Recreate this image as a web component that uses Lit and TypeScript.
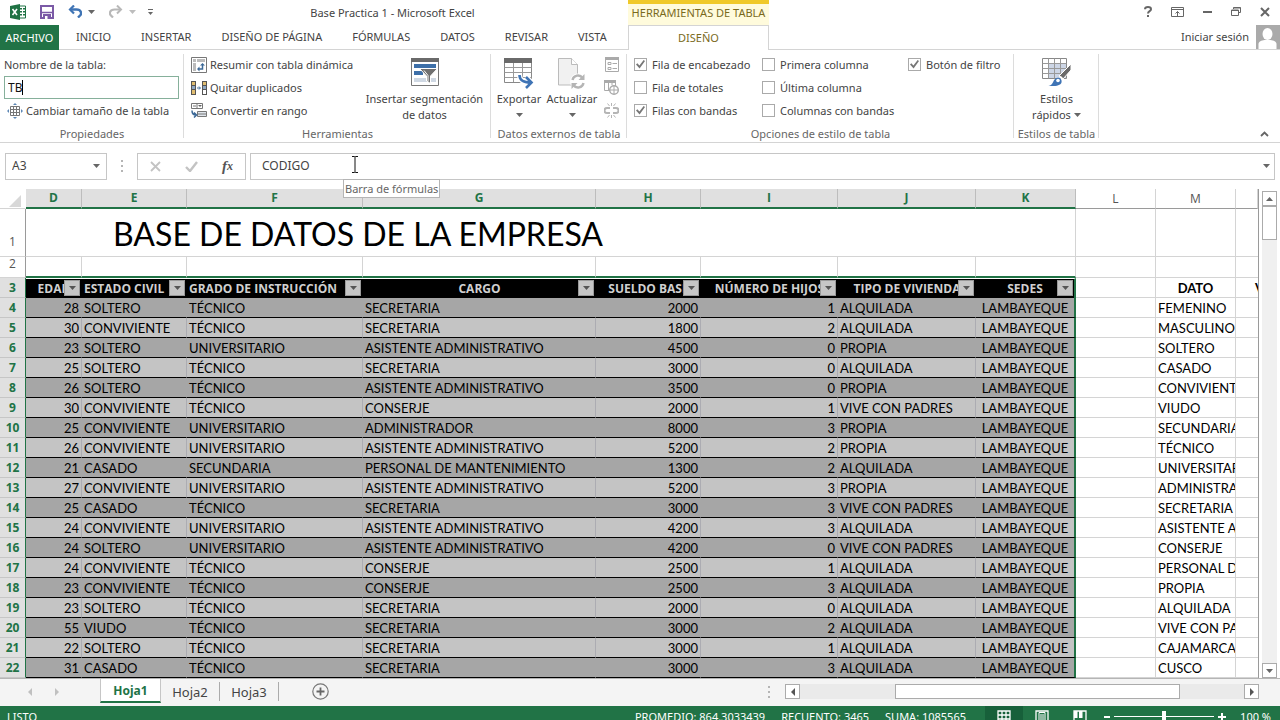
import { LitElement, html, css, svg } from "lit";
import { customElement } from "lit/decorators.js";
import { classMap } from "lit/directives/class-map.js";

type Row = [number, string, string, string, number, number, string];

const S = "SOLTERO", C = "CASADO", V = "CONVIVIENTE";
const T = "TÉCNICO", U = "UNIVERSITARIO";
const SEC = "SECRETARIA", ASI = "ASISTENTE ADMINISTRATIVO", CON = "CONSERJE";
const ALQ = "ALQUILADA", PRO = "PROPIA", PAD = "VIVE CON PADRES";

const ROWS: Row[] = [
  [28, S, T, SEC, 2000, 1, ALQ],
  [30, V, T, SEC, 1800, 2, ALQ],
  [23, S, U, ASI, 4500, 0, PRO],
  [25, S, T, SEC, 3000, 0, ALQ],
  [26, S, T, ASI, 3500, 0, PRO],
  [30, V, T, CON, 2000, 1, PAD],
  [25, V, U, "ADMINISTRADOR", 8000, 3, PRO],
  [26, V, U, ASI, 5200, 2, PRO],
  [21, C, "SECUNDARIA", "PERSONAL DE MANTENIMIENTO", 1300, 2, ALQ],
  [27, V, U, ASI, 5200, 3, PRO],
  [25, C, T, SEC, 3000, 3, PAD],
  [24, V, U, ASI, 4200, 3, ALQ],
  [24, S, U, ASI, 4200, 0, PAD],
  [24, V, T, CON, 2500, 1, ALQ],
  [23, V, T, CON, 2500, 3, ALQ],
  [23, S, T, SEC, 2000, 0, ALQ],
  [55, "VIUDO", T, SEC, 3000, 2, ALQ],
  [22, S, T, SEC, 3000, 1, ALQ],
  [31, C, T, SEC, 3000, 3, ALQ],
];

const DATO = [
  "FEMENINO", "MASCULINO", S, C, V, "VIUDO", "SECUNDARIA", T, U, "ADMINISTRADOR",
  SEC, ASI, CON, "PERSONAL DE MANTENIMIENTO", PRO, ALQ, PAD, "CAJAMARCA", "CUSCO",
];

const FIELDS = [
  "EDAD", "ESTADO CIVIL", "GRADO DE INSTRUCCIÓN", "CARGO",
  "SUELDO BASE", "NÚMERO DE HIJOS", "TIPO DE VIVIENDA", "SEDES",
];
const LETTERS = ["D", "E", "F", "G", "H", "I", "J", "K", "L", "M"];
const TABS = ["INICIO", "INSERTAR", "DISEÑO DE PÁGINA", "FÓRMULAS", "DATOS", "REVISAR", "VISTA"];

const icon = (w: number, h: number, body: unknown) =>
  html`<svg width=${w} height=${h} viewBox="0 0 ${w} ${h}" fill="none" aria-hidden="true">${body}</svg>`;

const down = (fill = "#666") => icon(7, 4, svg`<path d="M0 0h7L3.500 4z" fill=${fill}/>`);

const I = {
  excel: icon(16, 16, svg`
    <path d="M9 2h6.500v12H9z" fill="#fff" stroke="#1f7244"/>
    <path d="M10 4h2v1.500h-2zM13 4h2v1.500h-2zM10 7h2v1.500h-2zM13 7h2v1.500h-2zM10 10h2v1.500h-2zM13 10h2v1.500h-2z" fill="#1f7244"/>
    <path d="M0 2l10-2v16L0 14z" fill="#1f7244"/>
    <path d="M2.500 5l4.500 6M7 5l-4.500 6" stroke="#fff" stroke-width="1.600"/>`),
  save: icon(14, 14, svg`
    <path d="M1 1h12v12H1z" fill="#fff" stroke="#7b5aa6" stroke-width="2"/>
    <path d="M2 7.500h10" stroke="#7b5aa6" stroke-width="1.500"/>
    <path d="M3 9h8v5H3z" fill="#7b5aa6"/><path d="M5 11h2.500v3H5z" fill="#fff"/>`),
  undo: icon(14, 13, svg`
    <path d="M2 4.500h6.500c5 0 5 4 4 5.500l-2.500 2.500" stroke="#3f74b5" stroke-width="2.400"/>
    <path d="M6 .5L2 4.500l4 4" stroke="#3f74b5" stroke-width="2.200"/>`),
  redo: icon(14, 13, svg`
    <path d="M12 4.500H5.500c-5 0-5 4-4 5.500L4 12.500" stroke="#b8b8b8" stroke-width="2.200"/>
    <path d="M8 .5l4 4-4 4" stroke="#b8b8b8" stroke-width="2"/>`),
  more: icon(5, 6, svg`<path d="M0 .5h5" stroke="#666"/><path d="M0 3h5L2.500 6z" fill="#666"/>`),
  help: icon(8, 11, svg`<path d="M1 3.200C1 .3 7 .3 7 3.200 7 5.200 4 5 4 7.500" stroke="#666" stroke-width="2"/><path d="M3 9h2v2H3z" fill="#666"/>`),
  display: icon(13, 10, svg`<path d="M.5 .5h12v9H.5zM.5 2.500h12" stroke="#666"/><path d="M6.500 9V4.500M4.500 6.500l2-2 2 2" stroke="#666"/>`),
  min: icon(9, 2, svg`<path d="M0 0h9v2H0z" fill="#666"/>`),
  restore: icon(10, 9, svg`<path d="M2.500 2V.5h7v5H8M.5 3h7v5.500h-7zM.5 3.500h7M2.500 1h7" stroke="#666"/>`),
  close: icon(10, 10, svg`<path d="M1 1l8 8M9 1L1 9" stroke="#666" stroke-width="2"/>`),
  user: icon(24, 24, svg`
    <path d="M0 0h24v24H0z" fill="#aaa"/><ellipse cx="11.500" cy="9" rx="5" ry="6" fill="#fff"/>
    <path d="M2.500 24v-5c0-2.500 3-3.500 6-4h6c3 .5 6 1.500 6 4v5z" fill="#fff"/>`),
  resize: icon(16, 16, svg`
    <path d="M3.500 3.500h9v9h-9zM3.500 6.500h9M3.500 9.500h9M6.500 3.500v9M9.500 3.500v9" stroke="#777" fill="#fff"/>
    <path d="M8 0l2 2H6zM8 16l2-2H6zM0 8l2-2v4zM16 8l-2-2v4z" fill="#5d87b5"/>`),
  pivot: icon(16, 16, svg`
    <path d="M.5 .5h15v15H.5z" fill="#fff" stroke="#777"/>
    <path d="M2 2h3v3H2zM6 2h8v3H6zM2 6h3v8H2z" fill="#bbb"/>
    <path d="M7 12h4.500V7.500" stroke="#3c6997" stroke-width="1.500"/>
    <path d="M8.500 9.500v5L6 12zM9 8.500h5L11.500 6z" fill="#3c6997"/>`),
  dupes: icon(16, 14, svg`
    <path d="M0 0h5v14H0z" fill="#555"/><path d="M1 1h3v3H1zM1 9h3v4H1z" fill="#e0bd70"/><path d="M1 5h3v3H1z" fill="#8fa8c4"/>
    <path d="M6 7h3M8 5.500L9.500 7 8 8.500" stroke="#3c6997"/>
    <path d="M11 0h5v14h-5z" fill="#555"/><path d="M12 1h3v3h-3z" fill="#e0bd70"/><path d="M12 5h3v3h-3z" fill="#8fa8c4"/><path d="M12 9h3v4h-3z" fill="#fff"/>`),
  range: icon(16, 15, svg`
    <path d="M.5 .5h11v5H.5z" fill="#fff" stroke="#777"/><path d="M2 2h3v2H2z" fill="#bbb"/><path d="M6 .5v5" stroke="#777"/><path d="M7 2h4L9 4z" fill="#666"/>
    <path d="M6.500 8.500h9v5h-9zM6.500 11h9" fill="#dfe5ec" stroke="#777"/>
    <path d="M1 7.500c0 3 1 4.500 4 4.500M3 9.500L5.500 12 3 14.500" stroke="#3c6997" stroke-width="1.500"/>`),
  slicer: icon(28, 28, svg`
    <path d="M.5 .5h27v27H.5z" fill="#fff" stroke="#777"/><path d="M0 0h28v4H0z" fill="#6a6a6a"/>
    <path d="M3 6h22v4H3zM3 13h9v4H3z" fill="#3d6fa8"/><path d="M3 20h22v4H3z" fill="#cfd8e3"/>
    <path d="M8.500 10.500h18L19.500 18v7.500l-4-2.500v-5z" fill="#707070" stroke="#fff"/><path d="M13 12.500l4 5v6" stroke="#fff"/>`),
  export: icon(30, 31, svg`
    <path d="M.5 .5h27v24H.5z" fill="#fff" stroke="#888"/><path d="M.5 9.500h27M.5 14.500h27M.5 19.500h27M9.500 4v20M18.500 4v20" stroke="#999"/>
    <path d="M0 0h28v5H0z" fill="#6a6a6a"/>
    <path d="M15.500 17c0 5 3 7.500 10 7.500M22 19l6 5.500-6 5.500" stroke="#fff" stroke-width="5"/>
    <path d="M15.500 17c0 5 3 7.500 11 7.500M22 19l5.500 5.500L22 30" stroke="#3f74b5" stroke-width="2.600"/>`),
  refresh: icon(28, 31, svg`
    <path d="M.5 .5h13l6 6V27H.5z" fill="#f1f1f1" stroke="#bbb"/><path d="M13.500 .5v6h6" stroke="#bbb" fill="#fff"/>
    <circle cx="20" cy="23.500" r="8" fill="#fff"/>
    <path d="M14.500 22a5.500 5.500 0 0 1 10-2M25.500 25a5.500 5.500 0 0 1-10 2" stroke="#b5b5b5" stroke-width="2.400"/>
    <path d="M26.500 16v6h-6zM13.500 31v-6h6z" fill="#b5b5b5"/>`),
  props: icon(14, 15, svg`
    <path d="M.5 .5h13v14H.5z" stroke="#aaa" fill="#fff"/><path d="M0 0h14v3H0z" fill="#aaa"/>
    <path d="M3 5.500h3v2H3zM3 10.500h3v2H3z" stroke="#aaa"/><path d="M7.500 6.500H12M7.500 11.500H12" stroke="#aaa"/>`),
  browser: icon(15, 15, svg`
    <path d="M.5 .5h11v10H.5zM4.500 2v8M8 2v3" stroke="#aaa"/><path d="M0 0h12v3H0z" fill="#aaa"/>
    <circle cx="10" cy="10" r="4.300" fill="#fff" stroke="#aaa" stroke-width="1.400"/><path d="M6 10h8M10 6v8" stroke="#aaa"/>`),
  unlink: icon(15, 15, svg`
    <path d="M6 5H3a2.500 2.500 0 0 0 0 5h3M9 5h3a2.500 2.500 0 0 1 0 5H9" stroke="#b5b5b5" stroke-width="2"/>
    <path d="M7.500 0v3M7.500 12v3M3.500 .5l2 2.500M11.500 .5l-2 2.500M3.500 14.500l2-2.500M11.500 14.500l-2-2.500" stroke="#b5b5b5"/>`),
  styles: icon(29, 29, svg`
    <path d="M.5 .5h24v20H.5z" fill="#fff" stroke="#888"/><path d="M6 5h18v15H6z" fill="#cdd6e6"/>
    <path d="M.5 5.500h24M.5 10.500h24M.5 15.500h24M6.500 .5v20M12.500 .5v20M18.500 .5v20" stroke="#999"/>
    <path d="M29 6v6l-8 9-4-3z" fill="#6a6a6a" stroke="#fff"/>
    <path d="M18 18.500l3 3" stroke="#fff" stroke-width="2"/>
    <path d="M6.500 28c5-1 4-5 7-7.500 3-2 7 .5 6 4-1 3-6 4-13 3.500z" fill="#3f74b5"/><circle cx="16" cy="22.500" r="1.800" fill="#fff"/>`),
  collapse: icon(9, 6, svg`<path d="M1 5l3.500-3.500L8 5" stroke="#666" stroke-width="1.800"/>`),
  cancel: icon(11, 11, svg`<path d="M1 1l9 9M10 1l-9 9" stroke="#c3c3c3" stroke-width="1.800"/>`),
  ok: icon(13, 11, svg`<path d="M1 6l4 4 7-9" stroke="#c3c3c3" stroke-width="2.400"/>`),
  prev: icon(4, 8, svg`<path d="M4 0v8L0 4z" fill="#c0c0c0"/>`),
  next: icon(4, 8, svg`<path d="M0 0v8l4-4z" fill="#c0c0c0"/>`),
  add: icon(17, 17, svg`<circle cx="8.500" cy="8.500" r="7.700" stroke="#777" stroke-width="1.200"/><path d="M8.500 4.500v8M4.500 8.500h8" stroke="#666" stroke-width="1.800"/>`),
  dots: icon(2, 12, svg`<path d="M0 0h2v2H0zM0 5h2v2H0zM0 10h2v2H0z" fill="#b5b5b5"/>`),
  left: icon(4, 8, svg`<path d="M4 0v8L0 4z" fill="#555"/>`),
  right: icon(4, 8, svg`<path d="M0 0v8l4-4z" fill="#555"/>`),
  up: icon(7, 4, svg`<path d="M0 4h7L3.500 0z" fill="#666"/>`),
  corner: icon(12, 12, svg`<path d="M12 0v12H0z" fill="#d8d8d8"/>`),
  normal: icon(14, 14, svg`<path d="M1 1h12v12H1zM1 5h12M1 9h12M5 1v12M9 1v12" stroke="#fff" stroke-width="1.300"/>`),
  page: icon(14, 14, svg`<path d="M1 1h12v12H1z" stroke="#fff" stroke-width="1.300"/><path d="M4 2.500v9h6v-9zM5 5h4M5 7h4M5 9h4" stroke="#fff"/>`),
  breaks: icon(14, 14, svg`<path d="M1 1h12v12H1z" stroke="#fff" stroke-width="1.300"/><path d="M1 1h3.500v7H1zM6 1h3.500v7H6z" fill="#fff"/>`),
  ibeam: icon(8, 17, svg`<path d="M1 .5h2.500L4 1l.5-.5H7M1 16.500h2.500L4 16l.5.500H7M4 1v15" stroke="#111"/>`),
};

@customElement("app-root")
export class AppRoot extends LitElement {
  static styles = css`
    :host {
      display: flex;
      flex-direction: column;
      height: 100vh;
      overflow: hidden;
      background: #fff;
      color: #444;
      font: 11px/16px "Noto Sans", "Open Sans", sans-serif;
    }
    * { box-sizing: border-box; }
    svg { display: block; flex: none; }
    button, input {
      font: inherit;
      color: inherit;
      background: none;
      border: 0;
      padding: 0;
      margin: 0;
      border-radius: 0;
      min-width: 0;
    }
    input { font-size: 12px; }
    button { display: flex; align-items: center; justify-content: center; white-space: nowrap; flex: none; }
    a { color: inherit; text-decoration: none; }

    .title { display: flex; height: 25px; flex: none; }
    .quick { display: flex; align-items: center; width: 157px; padding: 0 4px 2px 10px; }
    .quick .save { margin: 0 14px; }
    .quick .drop { margin: 0 14px 0 6px; }
    .quick .drop.faded { margin-right: 12px; }
    .name { width: 471px; text-align: center; line-height: 26px; }
    .context {
      width: 141px;
      border-top: 4px solid #f0c929;
      background: #fffbdc;
      color: #7a6a1c;
      line-height: 18px;
      text-align: center;
      white-space: nowrap;
    }
    .window { display: flex; align-items: center; gap: 19px; margin-left: auto; padding: 0 10px 2px 0; }

    .tabs { display: flex; height: 25px; flex: none; border-bottom: 1px solid #d4d4d4; }
    .tabs .file { width: 59px; background: #217346; color: #fff; height: 25px; }
    .tabs .menu { display: flex; width: 569px; padding-left: 2px; }
    .tabs .tab { padding: 0 15px; }
    .tabs .active {
      width: 141px;
      height: 25px;
      background: #fff;
      color: #7a6a1c;
      border: 1px solid #d4d4d4;
      border-bottom: 0;
    }
    .account { display: flex; align-items: center; gap: 7px; margin-left: auto; }

    .ribbon { display: flex; height: 93px; flex: none; border-bottom: 1px solid #d4d4d4; }
    .group { position: relative; display: flex; flex-direction: column; padding-top: 3px; flex: none; }
    .group::after {
      content: "";
      position: absolute;
      right: 0; top: 4px; bottom: 4px;
      border-right: 1px solid #dcdcdc;
    }
    .group .body { display: flex; height: 73px; }
    .group .caption { color: #666; text-align: center; white-space: nowrap; }
    .stack { display: grid; grid-template-rows: repeat(3, 23px); align-items: center; justify-items: start; }
    .stack button { gap: 3px; }
    .g-props { width: 184px; }
    .g-props .body { padding-left: 4px; }
    .g-tools { width: 307px; }
    .g-tools .body { padding-left: 7px; }
    .g-data { width: 136px; }
    .g-data .body { gap: 4px; padding-left: 6px; }
    .g-options { width: 387px; }
    .g-options .body { padding-left: 7px; }
    .g-styles { width: 85px; }
    .field { position: relative; width: 175px; }
    .field input { display: block; width: 100%; height: 23px; border: 1px solid #86b09b; padding-left: 3px; color: #111; }
    .caret { position: absolute; left: 18px; top: 4px; width: 1px; height: 15px; background: #000; }
    .props-stack button { padding-left: 3px; }
    .big { flex-direction: column; justify-content: flex-start; align-self: flex-start; padding-top: 5px; }
    .big .pic { height: 33px; }
    .big .drop { height: 16px; display: flex; align-items: center; }
    .big .inline { display: flex; align-items: center; gap: 3px; }
    .export { width: 44px; }
    .refresh { width: 54px; }
    .slicer { width: 133px; margin-left: auto; }
    .quick-styles { width: 100%; }
    .small-icons { display: grid; grid-template-rows: repeat(3, 23px); align-items: center; margin-left: auto; padding-right: 8px; }
    .options { gap: 10px; }
    .options .first { width: 118px; }
    .options .second { width: 136px; }
    .check { display: flex; align-items: center; gap: 5px; white-space: nowrap; }
    .check input { appearance: none; width: 13px; height: 13px; border: 1px solid #aaa; background: #fff; }
    .check input:checked::before {
      content: "";
      display: block;
      width: 9px; height: 9px;
      margin: 1px;
      background: #777;
      clip-path: polygon(0 50%, 15% 35%, 38% 62%, 85% 0, 100% 12%, 40% 95%);
    }
    .collapse { margin-left: auto; align-self: flex-end; padding: 0 11px 5px 0; }

    .formula { position: relative; display: flex; align-items: center; height: 46px; flex: none; padding: 0 5px; }
    .box { display: flex; align-items: center; height: 27px; border: 1px solid #c6c6c6; background: #fff; }
    .name-box { width: 102px; padding: 0 6px; }
    .name-box input { flex: 1; }
    .formula .dots { margin: 0 14px; }
    .edit-box { width: 109px; justify-content: space-between; padding: 0 12px; }
    .fx { font: italic bold 15px/16px "Liberation Serif", serif; color: #555; }
    .fx small { font-size: 12px; }
    .input-box { flex: 1; margin-left: 4px; padding: 0 4px 0 11px; }
    .input-box input { flex: 1; }
    .tooltip {
      position: absolute;
      left: 343px; top: 36px;
      z-index: 2;
      border: 1px solid #b5b5b5;
      background: #fff;
      padding: 0 1px;
      line-height: 17px;
      color: #666;
    }
    .pointer { position: absolute; left: 351px; top: 13px; }

    .sheet { display: flex; flex: 1; min-height: 0; overflow: hidden; border-bottom: 1px solid #b5b5b5; }
    .cells { flex: 1; min-width: 0; border-right: 1px solid #9a9a9a; overflow: hidden; }
    table {
      width: 100%;
      table-layout: fixed;
      border-collapse: separate;
      border-spacing: 0;
      font: 13px/18px Lato, "Open Sans", sans-serif;
      color: #000;
    }
    .c0 { width: 26px; } .cD { width: 56px; } .cE, .cH { width: 105px; } .cF { width: 176px; }
    .cG { width: 233px; } .cI { width: 137px; } .cJ { width: 138px; } .cK { width: 100px; }
    .cL, .cM { width: 80px; }
    th, td {
      height: 20px;
      padding: 1px 2px 0;
      overflow: hidden;
      white-space: nowrap;
      text-align: left;
      font-weight: 400;
      border-right: 1px solid #d4d4d4;
      border-bottom: 1px solid #d4d4d4;
    }
    .letters th {
      padding: 0;
      text-align: center;
      color: #555;
      border-bottom: 1px solid #9a9a9a;
      font: 12px/18px "Open Sans", sans-serif;
    }
    .letters .sel { background: #e0e0e0; color: #217346; font-weight: 700; border-bottom: 2px solid #217346; border-right-color: #bdbdbd; }
    .letters .corner { border-right-color: #fff; border-bottom-color: #d4d4d4; }
    .corner svg { margin: 4px 4px 0 auto; }
    th.num { padding: 0; text-align: center; color: #555; font: 12px/18px "Open Sans", sans-serif; border-right-color: #9a9a9a; }
    th.num.sel { background: #e0e0e0; color: #217346; font-weight: 700; border-right: 1px solid #217346; border-bottom-color: #c6c6c6; }
    .r1 > * { height: 48px; vertical-align: bottom; }
    .r1 .num { vertical-align: bottom; padding-bottom: 5px; }
    .r1 .heading { padding: 0 0 3px 87px; font-size: 32px; line-height: 38px; vertical-align: bottom; }
    .r2 > * { height: 21px; }
    .r2 .num { vertical-align: top; line-height: 14px; }
    .r2 .over { border-bottom: 2px solid #217346; }
    .r3 .field-name {
      position: relative;
      background: #000;
      color: #d0d0d0;
      font: bold 12px/17px "Open Sans", sans-serif;
      text-align: center;
      padding-top: 0;
      padding-bottom: 1px;
      border-top: 1px solid #fff;
      border-right: 0;
      border-bottom: 0;
    }
    .r3 .field-name.long { text-align: left; }
    .filter {
      position: absolute;
      right: 2px; top: 1px;
      width: 16px; height: 16px;
      background: #c6c6c6;
      border: 1px solid #9a9a9a;
    }
    .edge .filter { right: 1px; }
    .edge { border-right: 2px solid #217346; }
    .r3 .field-name.edge { border-right: 2px solid #217346; }
    .band td.data { background: #a6a6a6; border-bottom-color: #000; border-right-color: #a6a6a6; }
    .plain td.data { background: #c4c4c4; border-bottom-color: #000; border-right-color: #acacb2; }
    .band td.data.edge, .plain td.data.edge { border-right-color: #217346; }
    .right { text-align: right; }
    .mid { text-align: center; }
    .strong { font-weight: 700; text-align: center; }
    .tail { border-right: 0; padding-left: 19px; font-weight: 700; }

    .vbar { display: flex; flex-direction: column; align-items: center; width: 21px; padding-top: 2px; }
    .arrow { width: 15px; height: 15px; border: 1px solid #ababab; background: #fff; flex: none; }
    .vtrack { flex: 1; width: 15px; background: #f0f0f0; }
    .vthumb { height: 34px; border: 1px solid #ababab; background: #fff; }

    .bottom { display: flex; align-items: center; height: 27px; flex: none; background: #f4f4f4; font-size: 13px; padding-bottom: 2px; }
    .nav { display: flex; gap: 23px; width: 100px; padding-left: 28px; }
    .sheet-tab { width: 59px; height: 19px; border-right: 1px solid #ababab; }
    .sheet-tab.on {
      width: 61px;
      height: 24px;
      align-self: flex-start;
      padding-top: 2px;
      background: #fff;
      color: #217346;
      font-size: 12px;
      font-weight: 700;
      border: 1px solid #c6c6c6;
      border-top: 0;
      border-bottom: 2px solid #217346;
    }
    .add { margin-left: 33px; }
    .hbar { display: flex; align-items: center; flex: none; width: 491px; margin: 0 21px 0 auto; }
    .hbar .dots { margin-right: 15px; }
    .htrack { display: flex; flex: 1; height: 15px; background: #eaeaea; padding-left: 95px; }
    .hthumb { width: 285px; border: 1px solid #ababab; background: #fff; }

    .status { display: flex; align-items: flex-start; height: 14px; flex: none; overflow: hidden; background: #217346; color: #fff; padding: 0 9px 0 7px; }
    .status .text { padding-top: 3px; white-space: nowrap; }
    .totals { display: flex; gap: 16px; margin-left: auto; padding-right: 19px; }
    .views { display: flex; padding-right: 5px; }
    .views button { width: 38px; height: 20px; padding-top: 2px; }
    .views .on { background: #17603a; }
    .zoom { display: flex; align-items: flex-start; gap: 4px; padding-top: 4px; }
    .zoom button { height: 13px; }
    .zoom input { appearance: none; width: 100px; height: 13px; background: linear-gradient(#fff, #fff) center / 100% 1px no-repeat; }
    .zoom input::-webkit-slider-thumb { appearance: none; width: 4px; height: 11px; background: #fff; }
    .percent { width: 45px; text-align: right; }
  `;

  private check(label: string, checked: boolean) {
    return html`<label class="check"><input type="checkbox" .checked=${checked} />${label}</label>`;
  }

  private ribbon() {
    return html`
      <section class="ribbon">
        <div class="group g-props">
          <div class="body">
            <div class="stack props-stack">
              <label for="table-name">Nombre de la tabla:</label>
              <div class="field"><input id="table-name" value="TB" /><span class="caret"></span></div>
              <button>${I.resize}Cambiar tamaño de la tabla</button>
            </div>
          </div>
          <div class="caption">Propiedades</div>
        </div>
        <div class="group g-tools">
          <div class="body">
            <div class="stack">
              <button>${I.pivot}Resumir con tabla dinámica</button>
              <button>${I.dupes}Quitar duplicados</button>
              <button>${I.range}Convertir en rango</button>
            </div>
            <button class="big slicer">
              <span class="pic">${I.slicer}</span><span>Insertar segmentación<br />de datos</span>
            </button>
          </div>
          <div class="caption">Herramientas</div>
        </div>
        <div class="group g-data">
          <div class="body">
            <button class="big export"><span class="pic">${I.export}</span><span>Exportar</span><span class="drop">${down()}</span></button>
            <button class="big refresh"><span class="pic">${I.refresh}</span><span>Actualizar</span><span class="drop">${down()}</span></button>
            <div class="small-icons">
              <button aria-label="Propiedades">${I.props}</button>
              <button aria-label="Abrir en el explorador">${I.browser}</button>
              <button aria-label="Desvincular">${I.unlink}</button>
            </div>
          </div>
          <div class="caption">Datos externos de tabla</div>
        </div>
        <div class="group g-options">
          <div class="body options">
            <div class="stack first">
              ${this.check("Fila de encabezado", true)}${this.check("Fila de totales", false)}${this.check("Filas con bandas", true)}
            </div>
            <div class="stack second">
              ${this.check("Primera columna", false)}${this.check("Última columna", false)}${this.check("Columnas con bandas", false)}
            </div>
            <div class="stack">${this.check("Botón de filtro", true)}</div>
          </div>
          <div class="caption">Opciones de estilo de tabla</div>
        </div>
        <div class="group g-styles">
          <div class="body">
            <button class="big quick-styles">
              <span class="pic">${I.styles}</span><span>Estilos</span>
              <span class="inline">rápidos ${down()}</span>
            </button>
          </div>
          <div class="caption">Estilos de tabla</div>
        </div>
        <button class="collapse" aria-label="Contraer la cinta">${I.collapse}</button>
      </section>
    `;
  }

  private row(r: Row, i: number) {
    const [age, civil, study, job, pay, kids, home] = r;
    return html`
      <tr class=${classMap({ band: i % 2 === 0, plain: i % 2 === 1 })}>
        <th class="num sel" scope="row">${i + 4}</th>
        <td class="data right">${age}</td>
        <td class="data">${civil}</td>
        <td class="data">${study}</td>
        <td class="data">${job}</td>
        <td class="data right">${pay}</td>
        <td class="data right">${kids}</td>
        <td class="data">${home}</td>
        <td class="data mid edge">LAMBAYEQUE</td>
        <td></td>
        <td>${DATO[i]}</td>
        <td class="tail"></td>
      </tr>
    `;
  }

  private grid() {
    return html`
      <table>
        <colgroup>
          <col class="c0" />${LETTERS.map((l) => html`<col class="c${l}" />`)}<col />
        </colgroup>
        <thead>
          <tr class="letters">
            <th class="corner">${I.corner}</th>
            ${LETTERS.map((l, i) => html`<th scope="col" class=${classMap({ sel: i < 8 })}>${l}</th>`)}
            <th></th>
          </tr>
        </thead>
        <tbody>
          <tr class="r1">
            <th class="num" scope="row">1</th>
            <td class="heading" colspan="8">BASE DE DATOS DE LA EMPRESA</td>
            <td></td><td></td><td class="tail"></td>
          </tr>
          <tr class="r2">
            <th class="num" scope="row">2</th>
            ${FIELDS.map(() => html`<td class="over"></td>`)}
            <td></td><td></td><td class="tail"></td>
          </tr>
          <tr class="r3">
            <th class="num sel" scope="row">3</th>
            ${FIELDS.map((f, i) => html`
              <td class=${classMap({ "field-name": true, long: i === 1 || i === 2, edge: i === 7 })}>${f}<button class="filter" aria-label="Filtrar ${f}">${down("#555")}</button></td>`)}
            <td></td><td class="strong">DATO</td><td class="tail">V</td>
          </tr>
          ${ROWS.map((r, i) => this.row(r, i))}
        </tbody>
      </table>
    `;
  }

  render() {
    return html`
      <header class="title">
        <div class="quick">
          ${I.excel}
          <button class="save" aria-label="Guardar">${I.save}</button>
          <button aria-label="Deshacer">${I.undo}</button><span class="drop">${down()}</span>
          <button aria-label="Rehacer">${I.redo}</button><span class="drop faded">${down("#bdbdbd")}</span>
          <button aria-label="Personalizar">${I.more}</button>
        </div>
        <div class="name">Base Practica 1 - Microsoft Excel</div>
        <div class="context">HERRAMIENTAS DE TABLA</div>
        <div class="window">
          <button aria-label="Ayuda">${I.help}</button>
          <button aria-label="Opciones de presentación">${I.display}</button>
          <button aria-label="Minimizar">${I.min}</button>
          <button aria-label="Restaurar">${I.restore}</button>
          <button aria-label="Cerrar">${I.close}</button>
        </div>
      </header>
      <nav class="tabs">
        <button class="file">ARCHIVO</button>
        <div class="menu">${TABS.map((t) => html`<button class="tab">${t}</button>`)}</div>
        <button class="active">DISEÑO</button>
        <div class="account"><a href="#">Iniciar sesión</a>${I.user}</div>
      </nav>
      ${this.ribbon()}
      <section class="formula">
        <div class="box name-box">
          <input aria-label="Cuadro de nombres" value="A3" /><button aria-label="Elegir nombre">${down()}</button>
        </div>
        <span class="dots">${I.dots}</span>
        <div class="box edit-box">
          <button aria-label="Cancelar">${I.cancel}</button>
          <button aria-label="Introducir">${I.ok}</button>
          <button class="fx" aria-label="Insertar función">f<small>x</small></button>
        </div>
        <div class="box input-box">
          <input aria-label="Barra de fórmulas" value="CODIGO" /><button aria-label="Expandir">${down()}</button>
        </div>
        <span class="pointer">${I.ibeam}</span>
        <div class="tooltip" role="tooltip">Barra de fórmulas</div>
      </section>
      <main class="sheet">
        <div class="cells">${this.grid()}</div>
        <div class="vbar">
          <button class="arrow" aria-label="Subir">${I.up}</button>
          <div class="vtrack"><div class="vthumb"></div></div>
          <button class="arrow" aria-label="Bajar">${down()}</button>
        </div>
      </main>
      <section class="bottom">
        <div class="nav"><button aria-label="Hoja anterior">${I.prev}</button><button aria-label="Hoja siguiente">${I.next}</button></div>
        ${["Hoja1", "Hoja2", "Hoja3"].map((n, i) => html`<button class=${classMap({ "sheet-tab": true, on: i === 0 })}>${n}</button>`)}
        <button class="add" aria-label="Hoja nueva">${I.add}</button>
        <div class="hbar">
          <span class="dots">${I.dots}</span>
          <button class="arrow" aria-label="Izquierda">${I.left}</button>
          <div class="htrack"><div class="hthumb"></div></div>
          <button class="arrow" aria-label="Derecha">${I.right}</button>
        </div>
      </section>
      <footer class="status">
        <span class="text">LISTO</span>
        <div class="totals text"><span>PROMEDIO: 864.3033439</span><span>RECUENTO: 3465</span><span>SUMA: 1085565</span></div>
        <div class="views">
          <button class="on" aria-label="Normal">${I.normal}</button>
          <button aria-label="Diseño de página">${I.page}</button>
          <button aria-label="Salto de página">${I.breaks}</button>
        </div>
        <div class="zoom">
          <button aria-label="Alejar">${icon(6, 2, svg`<path d="M0 0h6v2H0z" fill="#fff"/>`)}</button>
          <input type="range" min="0" max="100" value="50" aria-label="Zoom" />
          <button aria-label="Acercar">${icon(8, 8, svg`<path d="M3 0h2v3h3v2H5v3H3V5H0V3h3z" fill="#fff"/>`)}</button>
        </div>
        <span class="percent text">100 %</span>
      </footer>
    `;
  }
}
